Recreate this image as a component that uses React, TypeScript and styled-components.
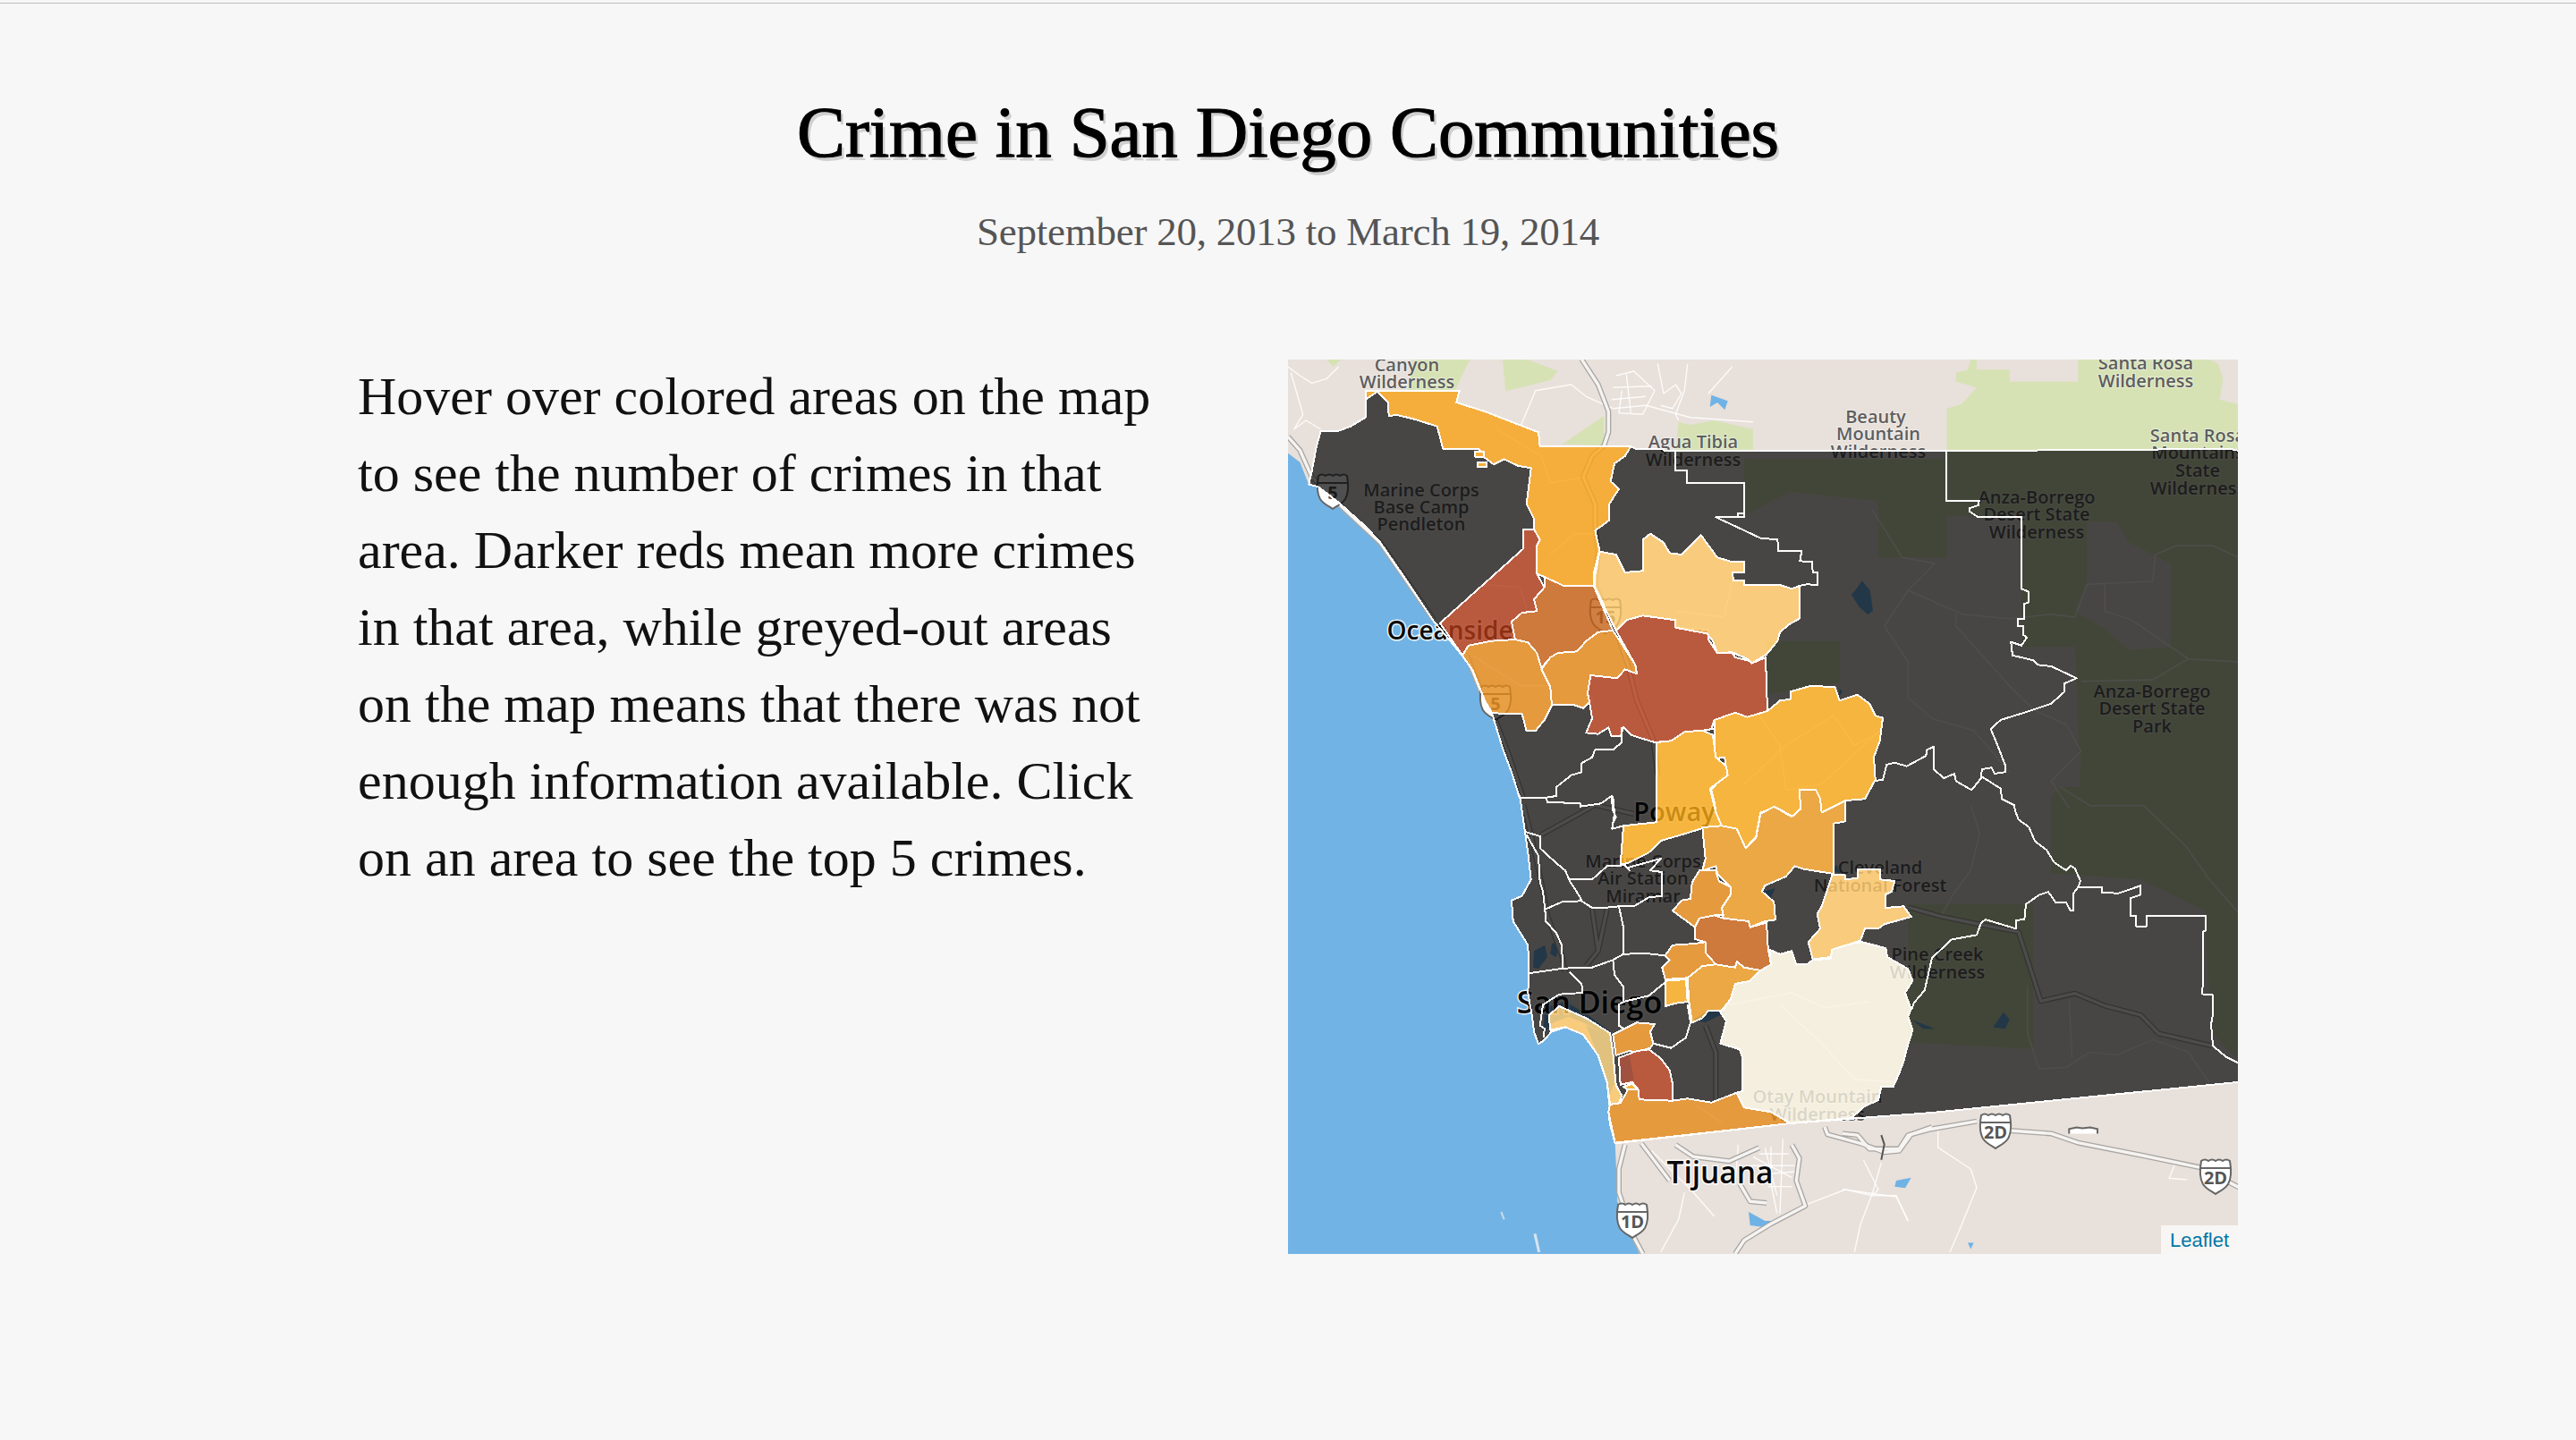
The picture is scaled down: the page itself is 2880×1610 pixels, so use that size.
import React from "react";
import styled, { createGlobalStyle } from "styled-components";

const Global = createGlobalStyle`
  html, body { margin: 0; padding: 0; background: #f7f7f7; }
`;
const Page = styled.div`
  width: 2880px; height: 1610px; overflow: hidden; background: #f7f7f7;
  display: flex; flex-direction: column; align-items: center;
`;
const TopRule = styled.div`
  width: 100%; height: 1px; margin-top: 3px; background: #bdbdbd; flex: none;
`;
const Title = styled.h1`
  margin: 96px 0 0; height: 96px; line-height: 96px; font-family: "Liberation Serif", serif;
  font-weight: 400; font-size: 81px; letter-spacing: -0.15px; color: #000; -webkit-text-stroke: 1.2px #000;
  text-shadow: 3px 4px 0 #cfcfcf; white-space: nowrap;
`;
const Subtitle = styled.h2`
  margin: 31px 0 0; height: 64px; line-height: 64px; font-family: "Liberation Serif", serif;
  font-weight: 400; font-size: 45px; letter-spacing: -0.25px; color: #555; white-space: nowrap;
`;
const Row = styled.div`
  margin-top: 111px; width: 100%; display: grid; grid-template-columns: 1040px 1062px; padding-left: 400px; box-sizing: border-box;
`;
const Intro = styled.p`
  margin: -2px 0 0; font-family: "Liberation Serif", serif; font-size: 60px; line-height: 86px; color: #111; white-space: nowrap;
`;
const MapFrame = styled.div`
  position: relative; width: 1062px; height: 1000px; overflow: hidden; background: #e8e0da;
`;
const MapSvg = styled.svg`
  display: block; width: 1062px; height: 1000px;
`;
const Attribution = styled.div`
  position: absolute; right: 0; bottom: 0; width: 86px; height: 32px; padding-top: 2px; box-sizing: border-box; background: rgba(255,255,255,.7);
  display: flex; align-items: center; justify-content: center;
`;
const AttrLink = styled.a`
  font-family: "Liberation Sans", Arial, sans-serif; font-size: 22px; color: #0078a8; text-decoration: none;
`;
const MapLabel = styled.text<{ $size: number; $strong?: boolean }>`
  font-family: "Open Sans", "Noto Sans", sans-serif;
  font-size: ${(p) => p.$size}px;
  font-weight: 600;
  fill: ${(p) => (p.$strong ? "#0a0a0a" : "#5e5e5e")};
  stroke: ${(p) => (p.$strong ? "rgba(255,255,255,.85)" : "rgba(255,255,255,.45)")};
  stroke-width: ${(p) => (p.$strong ? 3 : 2)}px;
  paint-order: stroke;
  text-anchor: middle;
`;
const ShieldText = styled.text`
  font-family: "Open Sans", sans-serif; font-size: 20px; font-weight: 700; fill: #555; text-anchor: middle;
`;

const FR: Record<string, [number, number, number, number]> = {
  A: [0, -2, 3, 3],
  C: [200, 488, 3, 3],
  D: [460, 98, 3, 3],
  Y: [620, -12, 3, 3],
  Z: [620, 478, 3, 2.904],
};
const seg = (f: string, s: string) =>
  s.trim().split(/\s+/).map((p) => {
    const [x, y] = p.split(",").map(Number);
    const [ox, oy, sx, sy] = FR[f];
    return `${(x / sx + ox).toFixed(1)} ${(y / sy + oy).toFixed(1)}`;
  });
const poly = (...parts: [string, string][]) =>
  "M" + parts.flatMap(([f, s]) => seg(f, s)).join(" L") + " Z";
const line = (...parts: [string, string][]) =>
  "M" + parts.flatMap(([f, s]) => seg(f, s)).join(" L");

const COAST_S = "480,1100 475,1060 480,1035 470,960 440,870 390,800 330,775 285,790 255,822 240,832 225,790 218,735 205,660 208,590 205,500 155,420 150,350 185,335 215,280 205,190 195,120 178,0";
const COAST_N = "775,1470 750,1390 720,1310 685,1195 660,1150 620,1050 585,1000 520,920 490,885 400,750 310,620 265,570 170,485 100,432";

const COUNTY = poly(
  ["A", "260,110 575,110 565,150 660,180 750,215 840,250 845,298 1150,298 1165,305 1260,305 1262,312 1560,312"],
  ["Y", "1040,340 1080,335 1300,335 1340,345 1340,958"],
  ["Z", "1340,955 1326,958"],
  ["C", "1560,1062 1290,1082 1085,1098 497,1165"],
  ["C", COAST_S],
  ["A", COAST_N + " 70,425 80,380 95,300 110,245 170,245 210,230 260,200 260,140"],
);
const OCEAN = poly(
  ["A", "0,3010 1180,3010"],
  ["C", "550,1470 505,1360 500,1230 497,1165"],
  ["C", COAST_S],
  ["A", COAST_N + " 70,425 40,350 0,320"],
);

const AMBER = "#f7a114", GOLD = "#f9aa18", PALE = "#fcc664", RED = "#ac3817", BURNT = "#c66014", ORANGE = "#e48817", ORANGE2 = "#eb9a1e", CREAM = "#f7f3e1";

const REGIONS: [string, string][] = [
  [AMBER, poly(["A", "260,110 575,110 565,150 660,180 750,215 840,250 845,298 1150,298 1130,330 1095,355 1082,415 1110,440 1078,490 1078,545 1030,580 1045,645 1025,725 1025,765 925,765 860,735 835,725 835,630 845,610 825,575 825,540 800,490 815,370 770,362 725,340 690,358 660,335 640,305 520,305 500,230 420,205 365,192 338,195 335,150 300,113 260,140"])],
  [AMBER, poly(["A", "628,314 658,314 658,332 628,332"])],
  [AMBER, poly(["A", "636,350 666,350 666,366 636,366"])],
  [RED, poly(["A", "790,575 825,575 845,610 835,630 835,725 860,770 825,810 835,850 785,855 750,885 762,945 680,950 605,965 585,998 510,890 790,640"])],
  [BURNT, poly(["A", "860,735 925,765 1025,765 1090,915 1040,920 1000,950 970,985 905,990 880,1005 850,1040 835,990 805,955 762,945 750,885 785,855 835,850 825,810 860,770"])],
  [ORANGE, poly(["A", "585,998 605,965 680,950 762,945 805,955 835,990 850,1040 880,1105 885,1165 860,1215 830,1252 800,1252 785,1195 685,1192 660,1150 620,1050"])],
  [ORANGE, poly(["A", "850,1045 880,1005 905,990 970,985 1000,950 1040,920 1090,915 1165,1030 1170,1060 1130,1045 1105,1075 1015,1065 1005,1125 1020,1145 990,1175 960,1165 885,1165 880,1105"])],
  [RED, poly(
    ["A", "1100,915 1135,880 1190,865 1300,880 1300,905 1410,912 1410,945 1440,990 1490,990 1500,1005 1560,1020"],
    ["D", "110,688 160,710 175,725 222,705 228,885 160,905 120,890 50,915 40,945"],
    ["A", "1425,1245 1390,1250 1330,1255 1285,1285 1230,1290 1190,1278 1150,1265 1125,1240 1115,1270 1085,1270 1075,1240 1040,1262 1000,1258 1020,1210 1010,1150 1005,1125 1015,1065 1105,1075 1130,1045 1170,1060 1165,1030"],
  )],
  [PALE, poly(
    ["A", "1030,730 1045,650 1100,660 1130,720 1190,715 1190,610 1215,590 1260,620 1280,655 1320,660 1385,595"],
    ["D", "60,370 110,385 150,385 150,420 110,420 115,448 150,448 150,462 270,462 310,475 335,465 335,575 300,595 270,620 262,650 225,695 175,725 160,710 110,688 60,690 45,650 25,625"],
    ["A", "1300,905 1300,880 1190,865 1135,880 1100,915 1030,770"],
  )],
  [GOLD, poly(["D", "50,915 120,890 160,905 228,885 270,850 305,845 305,820 375,800 455,805 470,850 530,830 570,860 590,900 615,908 605,985 585,1040 590,1115 555,1180 490,1185 410,1225 405,1180 390,1148 335,1148 340,1215 315,1240 260,1210 205,1225 190,1305 155,1345 125,1280 75,1270 58,1240 50,1190 40,1150 90,1090 85,1040 50,1045 50,965"])],
  [GOLD, poly(
    ["A", "1235,1290 1285,1285 1330,1255 1390,1250 1425,1265 1435,1340 1470,1370 1475,1400 1415,1445 1435,1525"],
    ["C", "855,100 800,105 720,130 650,150 610,190 540,225 515,230 525,100 635,88 636,0"],
  )],
  [ORANGE2, poly(
    ["C", "790,105 855,100 905,110 935,175 970,140 985,60 1030,35 1090,70 1115,45"],
    ["D", "340,1215 335,1148 390,1148 405,1180 410,1225 490,1185 490,1255 450,1262 450,1430"],
    ["C", "1225,260 1130,245 1100,235 1070,270 1000,300 990,320 1030,355 1035,415 1000,420 950,440 945,420 860,410 855,375 885,330 885,305 840,260 835,235 790,250 800,210"],
  )],
  [ORANGE, poly(["C", "780,250 835,250 845,285 885,305 885,330 855,375 860,400 830,400 780,410 765,440 690,385 720,350 750,345 755,290"])],
  [BURNT, poly(["C", "765,440 780,410 830,400 860,410 945,420 950,440 1005,425 1010,510 1020,565 985,585 930,575 905,555 900,575 835,565 800,525 800,490 765,480"])],
  [ORANGE, poly(["C", "690,500 765,495 800,490 800,525 835,565 790,570 740,610 665,615 655,575 680,550 665,535"])],
  [GOLD, poly(["C", "665,620 735,615 740,690 700,695 665,705"])],
  [ORANGE2, poly(["C", "740,610 790,570 835,565 900,575 905,555 930,575 985,585 950,620 900,630 885,680 860,720 810,720 790,745 755,760 745,690"])],
  [PALE, poly(["C", "1225,265 1268,265 1268,280 1310,275 1310,245 1385,245 1385,280 1435,285 1425,320 1405,330 1405,375 1465,370 1490,405 1400,430 1380,445 1335,445 1320,485 1225,515 1220,540 1160,548 1145,490 1185,445 1175,395 1190,370"])],
  [CREAM, poly(["C", "1015,515 1050,530 1090,520 1105,565 1140,565 1160,550 1220,545 1225,515 1290,495 1325,490 1405,510 1410,540 1480,580 1495,620 1470,660 1490,715 1480,740 1495,785 1475,850 1465,890 1450,930 1430,975 1390,975 1380,1020 1335,1040 1290,1080 1085,1098 1020,1060 930,1045 905,995 925,990 925,880 915,850 850,830 870,755 850,725 885,680 900,630 950,620 985,585 1020,565"])],
  [ORANGE, poly(["C", "475,1060 480,1035 515,1030 540,985 575,985 578,1018 690,1022 740,1015 820,1028 905,995 930,1045 1020,1060 1085,1098 497,1163"])],
  [PALE, poly(["C", "280,785 275,735 310,705 355,725 400,745 480,795 490,860 500,970 520,1005 510,1030 478,1035 470,960 440,870 390,800 330,775"])],
  [ORANGE, poly(["C", "490,800 570,760 630,765 615,790 625,830 615,845 570,860 545,855 500,870"])],
  [RED, poly(["C", "510,878 570,855 610,850 650,880 680,920 690,965 690,1022 578,1018 575,985 555,960 515,968"])],
  [GOLD, poly(["C", "525,975 555,965 572,985 540,985"])],
];

const BOUNDARIES: string[] = [
  line(["A", "1262,312 1300,312 1300,378 1338,378 1338,420"], ["D", "150,120 150,235 130,235 130,222 148,222 150,235 55,235 120,265 205,305 262,310 265,348 343,348 337,382 378,385 380,420 397,420 397,462 360,460 335,465"]),
  line(["Y", "348,340 348,510 458,510 455,525 425,535 425,545 455,565 600,565 600,805 625,815 625,850 610,855 610,905 588,905 588,930 605,930 607,960 618,968 600,995 565,983 570,1028 640,1045 655,1060 700,1065 785,1105 745,1122 745,1150 700,1190 610,1220 530,1245 497,1275 520,1330 545,1395 545,1420 510,1425 500,1405 467,1410 465,1440 433,1480 380,1450 375,1425 340,1440 305,1410 305,1335 283,1345 280,1365 215,1400 175,1388 148,1395 135,1445 105,1450"]),
  line(["Y", "467,1435 530,1475 535,1510 575,1530"], ["Z", "580,80 590,105 625,130 645,175 685,205 710,245 750,270 765,255 780,265 798,305 790,325 870,325 870,342 925,345 1000,320 1000,350 967,360 967,418 985,418 985,452 1020,452 1020,418 1218,418 1218,465 1210,470 1210,630 1205,672 1242,675 1242,740 1236,770 1242,840 1285,875 1326,895"]),
  line(["Z", "790,325 775,345 775,400 765,402 750,375 715,375 690,340 660,350 615,380 610,430 583,432 583,460 530,445 480,430 465,440 450,480 365,495 300,555 275,660 240,700 232,720"]),
  line(["A", "775,1475 865,1475 870,1490 980,1495 980,1505 1050,1495 1085,1470 1090,1520 1100,1540 1090,1560"]),
  line(["A", "865,1475 900,1470 900,1440 950,1400 985,1390 985,1360 1020,1340 1030,1315 1090,1315 1120,1290 1120,1240"]),
  line(["C", "490,0 495,60 487,110 525,100"]),
  line(["C", "195,120 245,135 245,175 300,225 330,250 345,285 380,340 385,352 420,375 460,375 510,370 560,370 610,340 655,335 655,255 615,250 650,210 540,240 545,250 530,232 470,235 420,280 345,280"]),
  line(["C", "200,130 240,200 245,290 255,320 262,380 320,355 385,352"]),
  line(["C", "262,380 265,420 300,460 318,500 322,578"]),
  line(["C", "510,370 525,440 525,530 600,528 665,535"]),
  line(["C", "205,595 322,578 420,575 490,550 525,530"]),
  line(["C", "490,550 495,600 525,640 525,690 510,700 510,770 525,780"]),
  line(["C", "345,590 385,630 388,660 310,665 255,700 245,770 260,780 258,810"]),
  line(["C", "525,690 610,670 665,625"]),
  line(["C", "740,700 750,760 735,810 685,845 625,830"]),
];

const GREEN: string[] = [
  poly(["Y", "430,36 450,36 450,70 560,70 560,110 790,110 790,36 1230,36 1260,50 1276,100 1265,170 1340,190 1340,340 350,340 350,200 400,185 450,130 380,110 380,80 420,70"]),
  poly(["A", "130,5 180,5 150,30"]),
  poly(["A", "610,5 560,110 400,110 420,5"]),
  poly(["A", "720,5 800,5 905,45 880,75 800,95 730,112"]),
  poly(["A", "920,290 1060,195 1060,295"]),
  poly(["A", "1310,215 1350,225 1430,210 1560,240 1560,310 1300,310"]),
  poly(["Y", "350,340 1340,340 1340,1560 800,1560 780,1000 600,1000 600,560 350,560"]),
  poly(["Z", "700,0 1340,0 1340,900 1240,800 1210,400 1000,300 700,280"]),
  poly(["Z", "220,380 640,380 640,850 220,830"]),
  poly(["D", "150,40 830,40 830,370 600,370 600,180 300,150 150,230"]),
  poly(["D", "225,650 470,650 470,790 225,830"]),
];
const TAN: string[] = [
  poly(["Y", "820,580 920,580 960,650 1040,690 1100,720 1100,1000 960,1010 880,940 780,880 820,790"]),
  poly(["Y", "570,1230 780,1260 800,1400 700,1500 570,1400"]),
];
const WATER: string[] = [
  poly(["D", "545,448 572,480 582,548 565,562 535,535 510,495 530,470"]),
  poly(["A", "1420,125 1475,145 1465,175 1440,150 1415,165"]),
  poly(["C", "945,1395 1000,1425 1025,1425 990,1445 950,1440"]),
  poly(["C", "1440,1290 1490,1280 1470,1315 1435,1310"]),
  poly(["Z", "505,780 540,730 560,755 545,785"]),
  poly(["Z", "232,755 310,785 270,785"]),
  poly(["C", "255,800 262,710 330,690 400,730 480,790 470,800 390,760 340,740 290,760"]),
  poly(["C", "400,770 480,800 495,960 480,1000 470,960 440,870"]),
  poly(["C", "225,520 262,500 270,540 240,580 222,575"]),
  poly(["C", "285,495 310,490 300,540 280,530"]),
  poly(["C", "510,880 545,870 560,950 515,965"]),
  poly(["C", "1240,230 1225,250 1255,260"]),
  poly(["D", "470,810 480,820 465,840"]),
  poly(["Z", "420,1480 440,1480 430,1500"]),
  poly(["C", "990,320 1035,310 1020,340"]),
  poly(["C", "760,750 815,715 860,720 860,730 800,760"]),
];

const HIGHWAYS: string[] = [
  line(["A", "985,5 1040,90 1075,180 1075,250 1060,295 1020,330 990,400 1030,490 1030,560 1040,650 1030,765 1100,915 1140,1030 1170,1150 1225,1280 1240,1400"]),
  line(["A", "0,265 40,310 80,400 170,490 310,620 400,750 490,880"]),
  line(["A", "600,1000 660,1150 690,1200 740,1330 790,1480"]),
  line(["C", "190,30 215,130 250,290 270,400 320,540 330,590"]),
  line(["Z", "560,1115 700,1125 790,1155 1000,1195 1200,1235 1340,1305"]),
  line(["Z", "450,1085 300,1110 220,1130 190,1175 90,1175 50,1130 0,1125"]),
  line(["C", "1200,1110 1210,1135 1320,1165 1400,1195 1450,1190 1490,1135 1560,1110"]),
  line(["C", "1090,1170 1115,1215 1105,1290 1135,1375 1020,1435 930,1490 900,1535"]),
  line(["C", "530,1170 510,1250 510,1330 560,1480 590,1535"]),
  line(["C", "700,1170 760,1210 880,1225 980,1180"]),
  line(["C", "915,1300 950,1360 1005,1365"]),
  line(["Z", "220,390 330,420 430,440 590,470 620,560 665,695 780,670 880,710 1000,740 1060,800 1240,840"]),
  line(["C", "585,1165 680,1290"]),
  line(["C", "800,770 835,860 835,1020"]),
  line(["C", "250,130 430,30 560,60"]),
  line(["C", "420,380 440,520 470,380"]),
  line(["C", "440,520 400,570"]),
];
const ROADS: string[] = [
  line(["A", "0,30 40,60 80,85 130,70 170,30"]),
  line(["A", "10,50 50,190 20,240 60,210 110,240"]),
  line(["A", "780,230 830,110 950,90 1000,130 1090,170 1200,160 1350,200 1560,215"]),
  line(["A", "1100,60 1160,45 1230,110 1190,190 1110,185 1120,110"]),
  line(["A", "1090,100 1220,95"]),
  line(["A", "1135,55 1150,185"]),
  line(["A", "1085,140 1200,130"]),
  line(["A", "1240,20 1260,120 1300,90 1320,120 1290,170 1250,160"]),
  line(["A", "1340,20 1330,110 1300,190 1310,210"]),
  line(["A", "1490,30 1410,120"]),
  line(["A", "700,240 850,330 880,420 1000,400"]),
  line(["A", "880,660 960,590 1030,590"]),
  line(["Y", "220,810 400,890 560,905 700,890 780,900 820,790 1040,780 1050,690 1120,660 1240,660 1330,700"]),
  line(["Y", "140,930 220,810 310,720 200,700 100,540"]),
  line(["Y", "380,890 380,930 560,1130 640,1210 750,1260 800,1350 700,1450 760,1540"]),
  line(["Y", "880,790 880,880 970,910 1160,1040 1330,1050"]),
  line(["Y", "800,1115 1040,1110 1160,1040"]),
  line(["Y", "140,930 220,1050 220,1170 300,1240 440,1280 560,1420"]),
  line(["Z", "430,60 460,150 430,270 370,350 330,420"]),
  line(["Z", "620,650 620,800 660,915 750,910 830,860 920,870 1040,820 1160,860 1230,960"]),
  line(["Z", "760,690 770,880"]),
  line(["Z", "730,0 830,60 1010,60 1150,190 1230,300 1330,410"]),
  line(["Z", "320,1110 320,1170 430,1240 450,1300 400,1420 360,1510"]),
  line(["Z", "0,1305 100,1320 180,1330 220,1410"]),
  line(["Z", "130,1220 100,1320 60,1420 40,1510"]),
  line(["Z", "1115,1225 1095,1270 1155,1275"]),
  line(["C", "620,1190 760,1330 830,1410"]),
  line(["C", "730,1330 710,1420 650,1530"]),
  line(["C", "1330,1220 1380,1320 1360,1340 1440,1340 1480,1425"]),
  line(["C", "1140,1370 1270,1320 1360,1340"]),
  line(["C", "1020,1175 1020,1300 1040,1400"]),
  line(["C", "950,1240 1100,1240"]),
  line(["C", "960,1210 1090,1280"]),
  line(["C", "910,1170 900,1300"]),
  line(["C", "1060,1150 1050,1400"]),
  line(["C", "980,1200 1080,1200"]),
  line(["C", "1000,1180 1040,1340"]),
  line(["C", "980,1270 1100,1260"]),
  line(["C", "1010,1310 1090,1310"]),
  line(["C", "880,700 1090,660 1200,710 1350,690"]),
  line(["C", "1050,700 1190,830 1300,950 1450,960"]),
  line(["C", "760,1030 860,1100"]),
  line(["A", "620,1000 780,1100 880,1100"]),
  line(["A", "640,760 780,770 800,840"]),
  line(["A", "1300,850 1460,870 1500,720"]),
  line(["D", "200,900 270,1000 290,1150 410,1130 605,950"]),
  line(["D", "150,1130 290,1000 450,900 520,1000 600,960"]),
];

const LABELS: [string, number, number, number, boolean?][] = [
  ["Canyon", 133, 13, 20], ["Wilderness", 133, 32, 20],
  ["Santa Rosa", 959, 11, 20], ["Wilderness", 959, 31, 20],
  ["Beauty", 657, 71, 20], ["Mountain", 660, 90, 20], ["Wilderness", 660, 110, 20],
  ["Agua Tibia", 453, 99, 20], ["Wilderness", 453, 119, 20],
  ["Santa Rosa", 1017, 92, 20], ["Mountains", 1017, 111, 20], ["State", 1017, 131, 20], ["Wilderness", 1017, 151, 20],
  ["Anza-Borrego", 837, 161, 20], ["Desert State", 837, 180, 20], ["Wilderness", 837, 200, 20],
  ["Anza-Borrego", 966, 378, 20], ["Desert State", 966, 397, 20], ["Park", 966, 417, 20],
  ["Marine Corps", 149, 153, 20], ["Base Camp", 149, 172, 20], ["Pendleton", 149, 191, 20],
  ["Marine Corps", 397, 568, 20], ["Air Station", 397, 587, 20], ["Miramar", 397, 607, 20],
  ["Cleveland", 662, 575, 20], ["National Forest", 662, 595, 20],
  ["Pine Creek", 726, 672, 20], ["Wilderness", 726, 692, 20],
  ["Otay Mountain", 592, 831, 20], ["Wilderness", 592, 851, 20],
  ["Oceanside", 181, 313, 28, true],
  ["Poway", 432, 516, 29, true],
  ["San Diego", 337, 731, 34, true],
  ["Tijuana", 483, 921, 33.5, true],
];

const Shield = ({ x, y, label }: { x: number; y: number; label: string }) => (
  <g transform={`translate(${x} ${y})`}>
    <path d="M-16 -17 Q-12 -20 -8 -17 Q-4 -20 0 -17 Q4 -20 8 -17 Q12 -20 16 -17 C18 -6 18 2 14 9 C10 15 4 17 0 20 C-4 17 -10 15 -14 9 C-18 2 -18 -6 -16 -17 Z" fill="#fff" stroke="#666" strokeWidth="2" />
    <path d="M-16 -9 L16 -9" stroke="#666" strokeWidth="2" />
    <ShieldText x="0" y="9">{label}</ShieldText>
  </g>
);

const SHIELDS: [number, number, string][] = [
  [50, 147, "5"], [232, 383, "5"], [355, 286, "15"], [385, 962, "1D"], [791, 862, "2D"], [1037, 913, "2D"],
];

export default function App() {
  return (
    <Page>
      <Global />
      <TopRule />
      <Title>Crime in San Diego Communities</Title>
      <Subtitle>September 20, 2013 to March 19, 2014</Subtitle>
      <Row>
        <Intro>
          Hover over colored areas on the map<br />
          to see the number of crimes in that<br />
          area. Darker reds mean more crimes<br />
          in that area, while greyed-out areas<br />
          on the map means that there was not<br />
          enough information available. Click<br />
          on an area to see the top 5 crimes.
        </Intro>
        <MapFrame>
          <MapSvg viewBox="0 0 1062 1000">
            <defs>
              <mask id="county-holes" maskUnits="userSpaceOnUse" x="0" y="0" width="1062" height="1000">
                <rect x="0" y="0" width="1062" height="1000" fill="#fff" />
                {REGIONS.map(([, d], i) => <path key={i} d={d} fill="#000" />)}
              </mask>
            </defs>
            <rect x="0" y="0" width="1062" height="1000" fill="#e8e0da" />
            {GREEN.map((d, i) => <path key={i} d={d} fill="#d6e2b4" />)}
            {TAN.map((d, i) => <path key={i} d={d} fill="#e8e0da" />)}
            <path d={OCEAN} fill="#72b3e5" />
            <path d={line(["C", "115,1395 125,1420"])} stroke="#c8dcec" strokeWidth="2" fill="none" />
            <path d={line(["C", "228,1468 242,1530"])} stroke="#d8e4ee" strokeWidth="3" fill="none" />
            {WATER.map((d, i) => <path key={i} d={d} fill="#6fb2e6" />)}
            {ROADS.map((d, i) => <path key={i} d={d} fill="none" stroke="#fff" strokeWidth="1.4" opacity="0.85" strokeLinejoin="round" />)}
            {HIGHWAYS.map((d, i) => <path key={i} d={d} fill="none" stroke="#a9a6a2" strokeWidth="6" strokeLinejoin="round" />)}
            {HIGHWAYS.map((d, i) => <path key={i} d={d} fill="none" stroke="#f6f4f2" strokeWidth="3.4" strokeLinejoin="round" />)}
            <path d={line(["Z", "130,1130 140,1160 130,1210"])} fill="none" stroke="#555" strokeWidth="2" />
            <path d={line(["Z", "760,1125 760,1110 785,1105 805,1108 830,1105 855,1110 855,1125"])} fill="#fff" stroke="#666" strokeWidth="2" />
            {SHIELDS.map(([x, y, t], i) => <Shield key={i} x={x} y={y} label={t} />)}
            {LABELS.map(([t, x, y, s, strong], i) => (
              <MapLabel key={i} x={x} y={y} $size={s} $strong={strong}>{t}</MapLabel>
            ))}
            <path d={COUNTY} fill="#000" fillOpacity="0.69" mask="url(#county-holes)" />
            <g shapeRendering="crispEdges">
              {REGIONS.map(([c, d], i) => (
                <path key={i} d={d} fill={c} fillOpacity="0.8" stroke="#fff" strokeWidth="2" strokeLinejoin="round" />
              ))}
              <path d={COUNTY} fill="none" stroke="#fff" strokeWidth="2" strokeLinejoin="round" />
              {BOUNDARIES.map((d, i) => (
                <path key={i} d={d} fill="none" stroke="#fff" strokeWidth="2" strokeLinejoin="round" />
              ))}
            </g>
          </MapSvg>
          <Attribution><AttrLink href="#">Leaflet</AttrLink></Attribution>
        </MapFrame>
      </Row>
    </Page>
  );
}
